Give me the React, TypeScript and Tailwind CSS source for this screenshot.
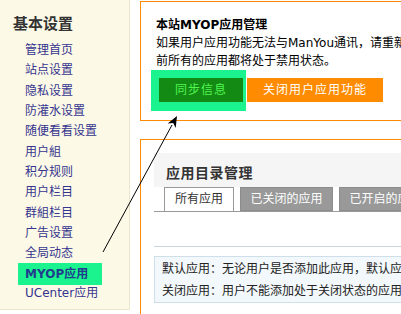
const font = 'font-["DejaVu_Sans","Noto_Sans_CJK_SC",sans-serif]';

const MENU = [
  '管理首页',
  '站点设置',
  '隐私设置',
  '防灌水设置',
  '随便看看设置',
  '用户組',
  '积分规则',
  '用户栏目',
  '群組栏目',
  '广告设置',
  '全局动态',
  'MYOP应用',
  'UCenter应用',
];

function Sidebar() {
  return (
    <div className="w-[130px] shrink-0 h-[310px] bg-[#fcf9e6] border-r border-b border-[#ebe6cc] pt-[14px]">
      <h3 className="pl-[13px] text-[15px] leading-[20px] font-bold text-[#333]">基本设置</h3>
      <ul className="mt-[6px] pl-[18px]">
        {MENU.map((item) =>
          item === 'MYOP应用' ? (
            <li key={item} className="h-[20.33px]">
              <span className="block w-[84px] -mt-[1px] h-[22px] pl-[7px] leading-[22px] bg-[#1af38e] text-[12px] font-bold text-[#203c8c]">
                {item}
              </span>
            </li>
          ) : (
            <li key={item} className="pl-[7px] h-[20.33px] leading-[20.33px] text-[12px] text-[#35358f]">
              {item}
            </li>
          )
        )}
      </ul>
    </div>
  );
}

function SyncPanel() {
  return (
    <div className="w-[420px] border border-[#ff8c00] pt-[14px] pb-[18px] pl-[15px] text-[12px] leading-[18px] text-black">
      <h4 className="font-bold">本站MYOP应用管理</h4>
      <p className="whitespace-nowrap">如果用户应用功能无法与ManYou通讯，请重新同步信息，同步后当</p>
      <p>前所有的应用都将处于禁用状态。</p>
      <div className="relative mt-[8px] ml-[3px] flex gap-[4px]">
        {/* highlight marker behind the sync button */}
        <div className="absolute -left-[8px] -top-[8px] w-[95px] h-[41px] bg-[#1af38e]" />
        <button className="relative w-[84px] h-[24px] bg-[#138a13] text-[#52f552] text-[12px] tracking-[1px]">
          同步信息
        </button>
        <button className="relative w-[136px] h-[24px] bg-[#ff8c00] text-white text-[12px] tracking-[1px]">
          关闭用户应用功能
        </button>
      </div>
    </div>
  );
}

function CatalogPanel() {
  return (
    <div className="mt-[18px] w-[420px] h-[200px] border border-[#ff8c00] pt-[13px] pl-[13px] text-[12px]">
      <div className="h-[34px] bg-[#f5f5f5] pl-[12px] pt-[10px]">
        <h3 className="text-[14px] leading-[20px] font-bold tracking-[0.5px] text-[#333]">应用目录管理</h3>
      </div>
      <div className="flex pl-[10px] border-b border-[#999]">
        <div className="w-[70px] h-[24px] -mb-px bg-white border border-b-0 border-[#999] text-center leading-[23px] text-[#333]">
          所有应用
        </div>
        <div className="ml-[6px] w-[93px] h-[24px] bg-[#999] border border-[#8c8c8c] text-center leading-[22px] text-white">
          已关闭的应用
        </div>
        <div className="ml-[6px] w-[93px] h-[24px] bg-[#999] border border-[#8c8c8c] text-center leading-[22px] text-white">
          已开启的应用
        </div>
      </div>
      <div className="mt-[34px] border-t border-[#cdd4da]" />
      <div className="mt-[9px] border border-[#cfdfe9] bg-[#f2f8fb] pl-[7px] pt-[1px] leading-[22px] text-[#222] whitespace-nowrap">
        <p>默认应用：无论用户是否添加此应用，默认应用都将显示在用户的菜单中</p>
        <p>关闭应用：用户不能添加处于关闭状态的应用</p>
      </div>
    </div>
  );
}

export default function App() {
  return (
    <div className={`relative w-[401px] h-[314px] overflow-hidden bg-white flex ${font}`}>
      <Sidebar />
      <div className="pl-[10px] pt-[1px] shrink-0">
        <SyncPanel />
        <CatalogPanel />
      </div>
      {/* annotation arrow */}
      <svg className="absolute left-0 top-0 pointer-events-none" width="401" height="314">
        <line x1="103" y1="252" x2="172" y2="125" stroke="#000" strokeWidth="1" />
        <polygon points="177,116 175.7,127.9 173.2,123 167.7,123.5" fill="#000" />
      </svg>
    </div>
  );
}
